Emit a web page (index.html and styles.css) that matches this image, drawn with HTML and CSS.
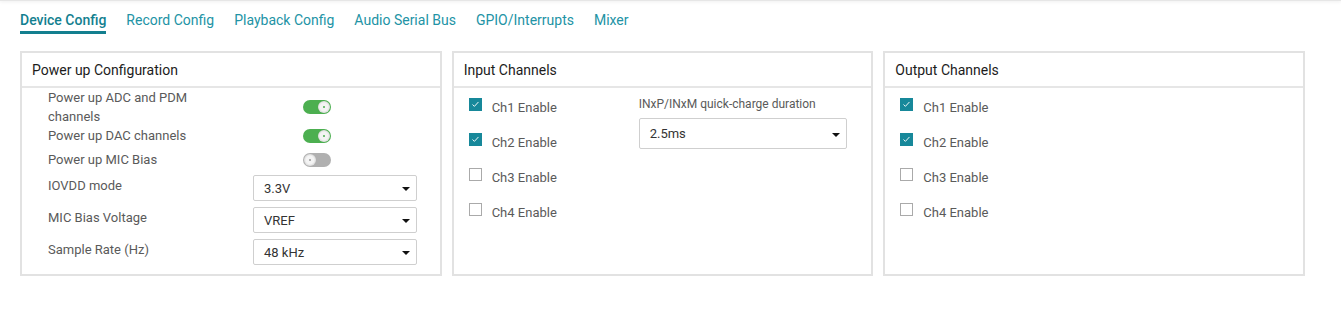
FILE: index.html
```html
<!DOCTYPE html>
<html lang="en">
<head>
    <meta charset="UTF-8">
    <title>Device Config</title>
    <link rel="stylesheet" href="styles.css">
</head>
<body>
    <div class="topbar"></div>

    <nav class="tabs">
        <a class="tab active">Device Config</a>
        <a class="tab">Record Config</a>
        <a class="tab">Playback Config</a>
        <a class="tab">Audio Serial Bus</a>
        <a class="tab">GPIO/Interrupts</a>
        <a class="tab">Mixer</a>
    </nav>

    <div class="panels">
        <!-- power up -->
        <section class="panel">
            <div class="panel-head">Power up Configuration</div>
            <div class="panel-body power">
                <div class="switch-row">
                    <span class="lbl">Power up ADC and PDM channels</span>
                    <span class="switch on"><span class="knob"></span></span>
                </div>
                <div class="switch-row">
                    <span class="lbl">Power up DAC channels</span>
                    <span class="switch on"><span class="knob"></span></span>
                </div>
                <div class="switch-row gap">
                    <span class="lbl">Power up MIC Bias</span>
                    <span class="switch"><span class="knob"></span></span>
                </div>

                <div class="select-row first">
                    <span class="lbl">IOVDD mode</span>
                    <div class="select">3.3V<span class="caret"></span></div>
                </div>
                <div class="select-row">
                    <span class="lbl">MIC Bias Voltage</span>
                    <div class="select">VREF<span class="caret"></span></div>
                </div>
                <div class="select-row">
                    <span class="lbl">Sample Rate (Hz)</span>
                    <div class="select">48 kHz<span class="caret"></span></div>
                </div>
            </div>
        </section>

        <!-- input channels -->
        <section class="panel">
            <div class="panel-head">Input Channels</div>
            <div class="panel-body channels">
                <div class="checks">
                    <label class="check"><span class="box checked"><svg viewBox="0 0 13 13"><path d="M3 6.5 L5.2 8.7 L10 3.5" /></svg></span>Ch1 Enable</label>
                    <label class="check"><span class="box checked"><svg viewBox="0 0 13 13"><path d="M3 6.5 L5.2 8.7 L10 3.5" /></svg></span>Ch2 Enable</label>
                    <label class="check"><span class="box"></span>Ch3 Enable</label>
                    <label class="check"><span class="box"></span>Ch4 Enable</label>
                </div>
                <div class="field">
                    <div class="field-lbl">INxP/INxM quick-charge duration</div>
                    <div class="select tall">2.5ms<span class="caret"></span></div>
                </div>
            </div>
        </section>

        <!-- output channels -->
        <section class="panel">
            <div class="panel-head">Output Channels</div>
            <div class="panel-body channels">
                <div class="checks">
                    <label class="check"><span class="box checked"><svg viewBox="0 0 13 13"><path d="M3 6.5 L5.2 8.7 L10 3.5" /></svg></span>Ch1 Enable</label>
                    <label class="check"><span class="box checked"><svg viewBox="0 0 13 13"><path d="M3 6.5 L5.2 8.7 L10 3.5" /></svg></span>Ch2 Enable</label>
                    <label class="check"><span class="box"></span>Ch3 Enable</label>
                    <label class="check"><span class="box"></span>Ch4 Enable</label>
                </div>
            </div>
        </section>
    </div>
</body>
</html>
```

FILE: styles.css
```css
body {
    margin: 0;
    font-family: Roboto, "Liberation Sans", sans-serif;
    background: #fff;
    color: #555;
}

.topbar {
    height: 1px;
    background: #e6e6e6;
    box-shadow: 0 1px 3px rgba(0, 0, 0, 0.12);
}

.tabs {
    display: flex;
    gap: 20px;
    padding-left: 20px;
}

.tab {
    font-size: 14px;
    line-height: 20px;
    padding-top: 9px;
    padding-bottom: 1px;
    border-bottom: 3px solid transparent;
    color: #2293a5;
    cursor: pointer;
}

.tab.active {
    color: #137f8f;
    font-weight: 500;
    border-bottom-color: #137f8f;
}

.panels {
    display: grid;
    grid-template-columns: repeat(3, 1fr);
    column-gap: 10px;
    margin: 17px 36px 0 20px;
}

.panel {
    border: 2px solid #e2e2e2;
}

.panel-head {
    height: 33px;
    line-height: 35px;
    padding-left: 10px;
    font-size: 14px;
    color: #1c1c1c;
    border-bottom: 2px solid #e6e6e6;
}

.panel-body {
    font-size: 13px;
}

/* power up panel */
.power {
    padding: 0 22px 8px 26px;
}

.lbl {
    line-height: 19px;
    color: #5a5a5a;
}

.switch-row {
    display: grid;
    grid-template-columns: 170px 28px;
    column-gap: 85px;
    align-items: center;
}

.switch-row .lbl {
    max-width: 160px;
}

.switch-row.gap {
    margin-top: 5px;
}

.switch {
    position: relative;
    width: 28px;
    height: 14px;
    border-radius: 7px;
    background: #b0b0b0;
}

.switch.on {
    background: #4caf50;
}

.knob {
    position: absolute;
    top: 1px;
    left: 1px;
    width: 12px;
    height: 12px;
    border-radius: 50%;
    background: radial-gradient(circle, #f4f4f4 0, #f4f4f4 45%, #d6d6d6 75%, #e8e8e8 100%);
}

.knob::after {
    content: "";
    position: absolute;
    top: 5px;
    left: 5px;
    width: 2px;
    height: 2px;
    border-radius: 50%;
    background: #9a9a9a;
}

.switch.on .knob {
    left: 15px;
}

.switch.on .knob::after {
    background: #4caf50;
}

.select-row {
    display: grid;
    grid-template-columns: 205px 164px;
    margin-top: 6px;
}

.select-row.first {
    margin-top: 6px;
}

.select-row .lbl {
    margin-top: 1px;
}

.select {
    position: relative;
    height: 24px;
    line-height: 25px;
    border: 1px solid #cfcfcf;
    border-radius: 2px;
    padding-left: 10px;
    font-size: 13px;
    color: #333;
}

.select.tall {
    height: 29px;
    line-height: 29px;
    width: 196px;
}

.caret {
    position: absolute;
    right: 6px;
    top: 50%;
    margin-top: -1px;
    border-left: 4px solid transparent;
    border-right: 4px solid transparent;
    border-top: 4px solid #111;
}

/* channel panels */
.channels {
    display: grid;
    grid-template-columns: 170px 208px;
    padding: 2px 15px 0 15px;
    min-height: 184px;
}

.check {
    display: flex;
    align-items: center;
    height: 35px;
    font-size: 13px;
    color: #5a5a5a;
}

.box {
    width: 11px;
    height: 11px;
    border: 1px solid #aaa;
    background: #fff;
    margin-right: 10px;
    margin-top: -6px;
}

.box.checked {
    background: #17889a;
    border-color: #17889a;
}

.box svg {
    display: block;
    width: 11px;
    height: 11px;
}

.box svg path {
    fill: none;
    stroke: #fff;
    stroke-width: 1.1;
}

.field {
    padding-top: 6px;
}

.field-lbl {
    font-size: 12px;
    line-height: 16px;
    color: #5a5a5a;
    margin-bottom: 6px;
}
```
